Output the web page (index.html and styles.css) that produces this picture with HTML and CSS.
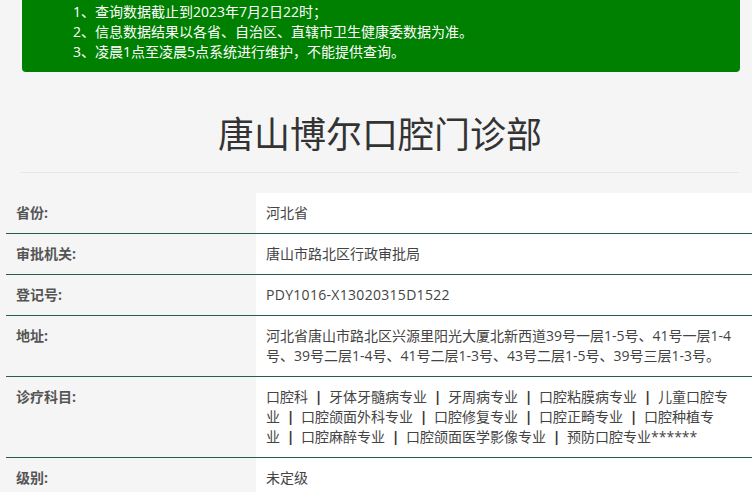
FILE: index.html
```html
<!DOCTYPE html>
<html lang="zh-CN">
<head>
<meta charset="utf-8">
<title>唐山博尔口腔门诊部</title>
<link rel="stylesheet" href="styles.css">
</head>
<body>
<div class="notice">
  <p>1、查询数据截止到2023年7月2日22时；</p>
  <p>2、信息数据结果以各省、自治区、直辖市卫生健康委数据为准。</p>
  <p>3、凌晨1点至凌晨5点系统进行维护，不能提供查询。</p>
</div>
<h1 class="title">唐山博尔口腔门诊部</h1>
<hr class="rule">
<table class="info">
  <tr><th>省份:</th><td>河北省</td></tr>
  <tr><th>审批机关:</th><td>唐山市路北区行政审批局</td></tr>
  <tr><th>登记号:</th><td><span class="latin">PDY1016-X13020315D1522</span></td></tr>
  <tr><th>地址:</th><td>河北省唐山市路北区兴源里阳光大厦北新西道39号一层1-5号、41号一层1-4号、39号二层1-4号、41号二层1-3号、43号二层1-5号、39号三层1-3号。</td></tr>
  <tr><th>诊疗科目:</th><td>口腔<span class="pair">科<span class="sep">|</span>牙</span>体牙髓病专<span class="pair">业<span class="sep">|</span>牙</span>周病专<span class="pair">业<span class="sep">|</span>口</span>腔粘膜病专<span class="pair">业<span class="sep">|</span>儿</span>童口腔专<span class="pair">业<span class="sep">|</span>口</span>腔颌面外科专<span class="pair">业<span class="sep">|</span>口</span>腔修复专<span class="pair">业<span class="sep">|</span>口</span>腔正畸专<span class="pair">业<span class="sep">|</span>口</span>腔种植专<span class="pair">业<span class="sep">|</span>口</span>腔麻醉专<span class="pair">业<span class="sep">|</span>口</span>腔颌面医学影像专<span class="pair">业<span class="sep">|</span>预</span>防口腔专业******</td></tr>
  <tr><th>级别:</th><td>未定级</td></tr>
</table>
</body>
</html>
```
FILE: styles.css
```css
html, body {
  margin: 0;
  padding: 0;
  background: #f5f5f5;
  font-family: "Open Sans", "Noto Sans CJK SC", sans-serif;
  font-size: 14px;
  line-height: 20px;
  color: #333;
  overflow: hidden;
}
.notice {
  margin: 0 12px 0 22px;
  padding: 2px 10px 10px 51px;
  background: #008000;
  color: #fff;
  border-radius: 0 0 4px 4px;
}
.notice p {
  margin: 0;
}
.title {
  margin: 43px 12px 0 20px;
  font-size: 36px;
  line-height: 40px;
  font-weight: normal;
  text-align: center;
  color: #333;
}
.rule {
  margin: 17px 13px 0 20px;
  border: 0;
  border-top: 1px solid #e8e8e8;
  height: 0;
}
.info {
  margin: 20px 0 0 6px;
  width: 746px;
  border-collapse: collapse;
}
.info th,
.info td {
  padding: 10px;
  vertical-align: top;
  border-bottom: 1px solid #22604a;
  text-align: left;
}
.info th {
  width: 230px;
  font-weight: bold;
  color: #555;
}
.info td {
  background: #fff;
  color: #444;
}
.latin {
  letter-spacing: 0.3px;
}
.pair {
  white-space: nowrap;
}
.sep {
  display: inline-block;
  width: 21px;
  text-align: center;
  color: #333;
  font-weight: bold;
}
```
